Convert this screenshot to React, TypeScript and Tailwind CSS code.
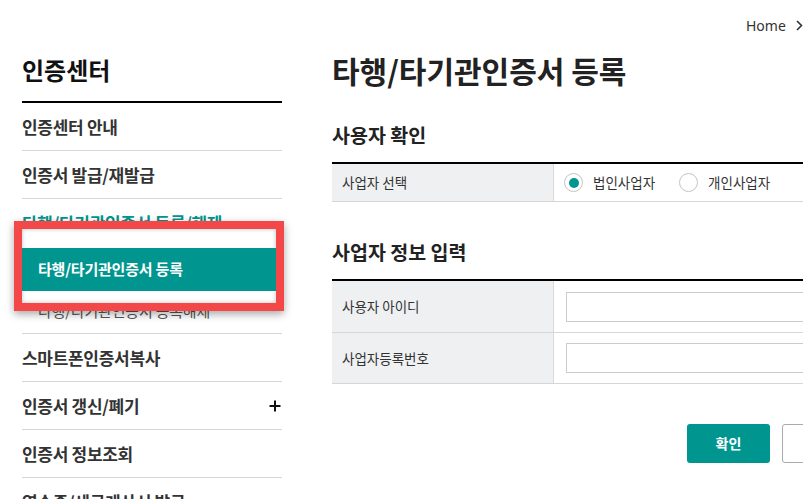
import React from "react";

const KR = { fontFamily: '"Noto Sans CJK KR", "Noto Sans", sans-serif' };

function Radio({ checked, label }: { checked: boolean; label: string }) {
  return (
    <div className="flex items-center">
      <span className="w-[19px] h-[19px] rounded-full border border-[#c4c4c4] bg-white flex items-center justify-center">
        {checked && <span className="w-[10px] h-[10px] rounded-full bg-[#00968f]" />}
      </span>
      <span className="ml-[10px] text-[13.5px] text-[#333]">{label}</span>
    </div>
  );
}

const itemCls =
  "h-[48px] flex items-center border-b border-[#d6d6d6] text-[17px] font-bold text-[#333] tracking-[-0.3px]";

export default function App() {
  return (
    <div className="relative w-[803px] h-[499px] overflow-hidden bg-white" style={KR}>
      {/* breadcrumb */}
      <div className="h-[50px] flex items-center pl-[746px] whitespace-nowrap">
        <span className="text-[14px] text-[#333]" style={{ fontFamily: '"Noto Sans", sans-serif' }}>Home</span>
        <svg className="ml-[10px]" width="7" height="11" viewBox="0 0 7 11">
          <path d="M1 1 L5.5 5.5 L1 10" fill="none" stroke="#333" strokeWidth="1.6" />
        </svg>
      </div>

      <div className="flex pl-[22px] gap-[50px]">
        {/* sidebar */}
        <aside className="w-[260px] shrink-0">
          <div className="h-[53px] border-b-2 border-black">
            <h2 className="text-[24px] leading-[40px] font-bold text-[#111]">인증센터</h2>
          </div>
          <ul>
            <li className={itemCls}>인증센터 안내</li>
            <li className={itemCls}>인증서 발급/재발급</li>
            <li className="border-b border-[#d6d6d6]">
              <div className="h-[48px] flex items-center text-[17px] font-bold text-[#00968f] tracking-[-0.3px]">타행/타기관인증서 등록/해제</div>
              <div className="h-[43px] flex items-center pl-[16px] bg-[#00968f] text-[15px] font-bold text-white tracking-[-0.2px]">타행/타기관인증서 등록</div>
              <div className="h-[43px] flex items-center pl-[16px] text-[15px] text-[#555] tracking-[-0.2px]">타행/타기관인증서 등록해제</div>
            </li>
            <li className={itemCls}>스마트폰인증서복사</li>
            <li className={itemCls + " justify-between"}>
              <span>인증서 갱신/폐기</span>
              <svg width="12" height="12" viewBox="0 0 12 12" className="mr-[1px]">
                <path d="M6 0.5 V11.5 M0.5 6 H11.5" stroke="#111" strokeWidth="2" />
              </svg>
            </li>
            <li className={itemCls}>인증서 정보조회</li>
            <li className={itemCls}>영수증/세금계산서 발급</li>
          </ul>
        </aside>

        {/* main */}
        <main className="w-[888px] shrink-0">
          <h1 className="h-[40px] leading-[40px] text-[30px] font-bold text-[#222] whitespace-nowrap">타행/타기관인증서 등록</h1>

          <h3 className="mt-[32px] h-[26px] leading-[26px] text-[19.5px] font-bold text-[#222]">사용자 확인</h3>
          <div className="mt-[14px] border-t-2 border-black">
            <div className="flex h-[38px] border-b border-[#d6d6d6]">
              <div className="w-[222px] bg-[#eff0f2] border-r border-[#d9d9d9] flex items-center pl-[10px] text-[13.5px] text-[#333]">사업자 선택</div>
              <div className="flex items-center pl-[10px] gap-[24px]">
                <Radio checked label="법인사업자" />
                <Radio checked={false} label="개인사업자" />
              </div>
            </div>
          </div>

          <h3 className="mt-[37px] h-[26px] leading-[26px] text-[19.5px] font-bold text-[#222]">사업자 정보 입력</h3>
          <div className="mt-[14px] border-t-2 border-black">
            <div className="flex h-[52px] border-b border-[#d6d6d6]">
              <div className="w-[222px] bg-[#eff0f2] border-r border-[#d9d9d9] flex items-center pl-[10px] text-[13.5px] text-[#333]">사용자 아이디</div>
              <div className="flex items-center pl-[12px]">
                <input className="w-[320px] h-[30px] border border-[#cccccc] outline-none" />
              </div>
            </div>
            <div className="flex h-[51px] border-b border-[#d6d6d6]">
              <div className="w-[222px] bg-[#eff0f2] border-r border-[#d9d9d9] flex items-center pl-[10px] text-[13.5px] text-[#333]">사업자등록번호</div>
              <div className="flex items-center pl-[12px]">
                <input className="w-[320px] h-[30px] border border-[#cccccc] outline-none" />
              </div>
            </div>
          </div>

          <div className="mt-[40px] flex justify-center gap-[12px]">
            <button className="w-[83px] h-[39px] rounded-[3px] bg-[#00968f] text-white text-[14px] font-bold">확인</button>
            <button className="w-[83px] h-[39px] rounded-[3px] bg-white border border-[#aaaaaa] text-[#333] text-[14px] font-bold">취소</button>
          </div>
        </main>
      </div>

      {/* annotation overlay */}
      <div className="absolute left-[14px] top-[221px] w-[270px] h-[90px] border-[8px] border-[#f44848] bg-white shadow-[0_3px_8px_rgba(0,0,0,0.35),inset_0_0_4px_rgba(0,0,0,0.25)]">
        <div className="mt-[19px] h-[43px] flex items-center pl-[16px] bg-[#00968f] text-[15px] font-bold text-white tracking-[-0.2px]">타행/타기관인증서 등록</div>
      </div>
    </div>
  );
}
